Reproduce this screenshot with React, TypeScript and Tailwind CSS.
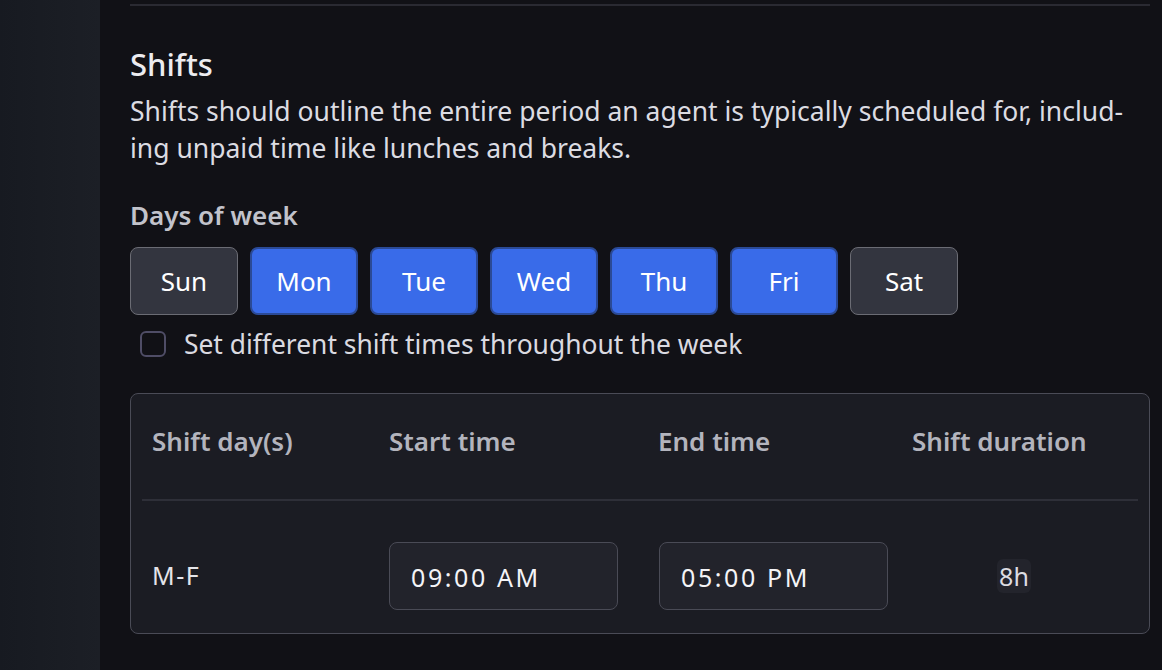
import React from 'react';

const days = [
  { label: 'Sun', on: false },
  { label: 'Mon', on: true },
  { label: 'Tue', on: true },
  { label: 'Wed', on: true },
  { label: 'Thu', on: true },
  { label: 'Fri', on: true },
  { label: 'Sat', on: false },
];

function TimeInput({ value }: { value: string }) {
  return (
    <div className="flex h-[68px] w-[229px] items-center rounded-lg border border-[#4a4b56] bg-[#22232b] px-[21px] pt-[4px] text-[25px] tracking-[2.6px] text-[#f4f4f7]">
      {value}
    </div>
  );
}

export default function App() {
  return (
    <div
      className="flex h-[670px] w-[1162px] overflow-hidden bg-[#111116] text-white"
      style={{ fontFamily: '"Noto Sans", "Open Sans", sans-serif' }}
    >
      <aside className="w-[100px] shrink-0 bg-gradient-to-r from-[#171a21] to-[#1c1f26]" />

      <main className="flex flex-1 flex-col pl-[30px] pr-[12px]">
        <div className="mt-[4px] h-[2px] bg-[#2a2a32]" />

        <h2 className="mt-[39px] text-[31px] font-medium leading-[38px] text-[#ececf0]">Shifts</h2>
        <p className="mt-[10px] text-[26.5px] leading-[37px] text-[#dcdce2]">
          Shifts should outline the entire period an agent is typically scheduled for, includ-
          <br />
          ing unpaid time like lunches and breaks.
        </p>

        <p className="mt-[33px] text-[26px] font-semibold leading-[30px] text-[#c2c3cb]">Days of week</p>

        <div className="mt-[17px] flex gap-[12px]">
          {days.map((d) => (
            <button
              key={d.label}
              className={
                d.on
                  ? 'flex h-[68px] w-[108px] items-center justify-center rounded-lg border-2 border-[#2b4a96] bg-[#396be9] text-[26px] text-white'
                  : 'flex h-[68px] w-[108px] items-center justify-center rounded-lg border border-[#6b6c74] bg-[#33353f] text-[26px] text-white'
              }
            >
              {d.label}
            </button>
          ))}
        </div>

        <label className="mt-[13px] flex items-center gap-[18px] pl-[10px]">
          <span className="h-[26px] w-[26px] rounded-[6px] border-2 border-[#4f4d66]" />
          <span className="text-[26.4px] leading-[32px] text-[#dadae0]">Set different shift times throughout the week</span>
        </label>

        <div className="mt-[33px] h-[241px] rounded-lg border border-[#4a4b56] bg-[#1b1c23] px-[11px]">
          <div className="flex h-[107px] items-center border-b-2 border-[#2e2f38] pb-[10px] pl-[10px] text-[26px] font-semibold text-[#b3b4bd]">
            <span className="w-[237px]">Shift day(s)</span>
            <span className="w-[269px]">Start time</span>
            <span className="w-[254px]">End time</span>
            <span>Shift duration</span>
          </div>
          <div className="flex items-center pl-[10px] pt-[41px] text-[25px] text-[#e4e4e9]">
            <span className="w-[237px] tracking-[1.5px]">M-F</span>
            <div className="w-[270px]">
              <TimeInput value="09:00 AM" />
            </div>
            <div className="w-[289px]">
              <TimeInput value="05:00 PM" />
            </div>
            <div className="flex w-[132px] justify-center">
              <span className="rounded-md bg-[#23242c] px-[2px] leading-[34px] text-[#dcdce2]">8h</span>
            </div>
          </div>
        </div>
      </main>
    </div>
  );
}
